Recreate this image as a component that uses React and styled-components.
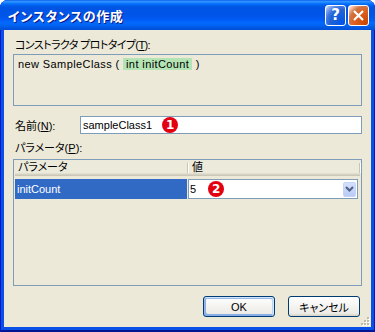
import React from 'react';
import styled, { createGlobalStyle } from 'styled-components';

const GlobalStyle = createGlobalStyle`
    html, body {
        margin: 0;
        padding: 0;
        background: #fff;
    }
    body {
        font-family: "Liberation Sans", "Noto Sans CJK JP", sans-serif;
        font-size: 11px;
        color: #000;
        font-feature-settings: "palt";
    }
`;

const Window = styled.div`
    width: 375px;
    height: 332px;
    display: flex;
    flex-direction: column;
    border-radius: 8px 8px 0 0;
    overflow: hidden;
    background: #0a4fe6;
    box-shadow: inset 1px 0 #0019c8, inset -1px 0 #0019c8, inset 0 -2px #00158f;
`;

const TitleBar = styled.div`
    height: 30px;
    flex: none;
    display: flex;
    align-items: center;
    padding: 0 6px 0 8px;
    background: linear-gradient(to bottom, #0058ee 0%, #3593ff 4%, #288eff 7%, #127dff 10%, #036ffc 13%, #0262ee 17%, #0057e5 23%, #0054e3 27%, #0055eb 56%, #005bf5 66%, #026afe 76%, #0062ef 86%, #0056e0 93%, #004fd6 100%);
`;

const Title = styled.div`
    flex: 1;
    color: #fff;
    font-size: 13px;
    font-weight: bold;
    letter-spacing: 0.6px;
    text-shadow: 1px 1px #0a1883;
`;

const CaptionButtons = styled.div`
    display: flex;
    gap: 2px;
`;

const CaptionButton = styled.div`
    width: 21px;
    height: 21px;
    box-sizing: border-box;
    border: 1px solid #fff;
    border-radius: 3px;
    display: flex;
    align-items: center;
    justify-content: center;
    color: #fff;
    font-family: "DejaVu Sans", sans-serif;
    font-weight: bold;
    font-size: 15px;
    background: ${p => (p.$close
        ? 'radial-gradient(circle at 90% 90%, #cc4600 0%, #dc6527 55%, #cd7546 70%, #ffccb2 90%, #fff 100%)'
        : 'radial-gradient(circle at 90% 90%, #0054e9 0%, #2263d5 55%, #4479e4 70%, #a3bbec 90%, #fff 100%)')};
`;

const Client = styled.div`
    position: relative;
    flex: 1;
    margin: 0 4px 5px;
    padding: 8px 9px 0;
    display: flex;
    flex-direction: column;
    background: #ece9d8;
`;

const Label = styled.div`
    height: 14px;
    line-height: 14px;
    padding-left: 2px;
    margin-top: ${p => p.$top || 0}px;
    letter-spacing: ${p => p.$tight ? '-0.6px' : 'normal'};
    white-space: nowrap;
`;

const Key = styled.span`
    text-decoration: underline;
`;

const ProtoBox = styled.div`
    margin-top: 2px;
    height: 52px;
    box-sizing: border-box;
    border: 1px solid #7f9db9;
    padding: 2px 4px;
    line-height: 14px;
    letter-spacing: 0.4px;
    white-space: pre;
`;

const Param = styled.span`
    background: #b4e4b4;
    padding: 0 3px;
`;

const NameRow = styled.div`
    margin-top: 10px;
    height: 18px;
    display: flex;
    align-items: center;
`;

const NameLabel = styled.div`
    width: 65px;
    padding-left: 2px;
    flex: none;
`;

const TextBox = styled.div`
    flex: 1;
    height: 18px;
    box-sizing: border-box;
    border: 1px solid #7f9db9;
    background: #fff;
    display: flex;
    align-items: center;
    padding-left: 2px;
`;

const Badge = styled.span`
    width: 16px;
    height: 16px;
    border-radius: 50%;
    background: #e3000f;
    color: #fff;
    font-family: "DejaVu Sans", sans-serif;
    font-weight: bold;
    font-size: 12px;
    letter-spacing: 0;
    display: inline-flex;
    align-items: center;
    justify-content: center;
    margin-left: ${p => p.$gap}px;
    flex: none;
`;

const Grid = styled.div`
    margin-top: 4px;
    height: 127px;
    box-sizing: border-box;
    border: 1px solid #7f9db9;
    padding: 0 1px;
`;

const Header = styled.div`
    height: 16px;
    display: flex;
    background: #ebeadb;
    box-shadow: inset 0 -1px #cbc7b8, inset 0 -2px #d6d2c2, inset 0 -3px #e2ded0;
`;

const HeaderCell = styled.div`
    position: relative;
    width: ${p => (p.$width ? `${p.$width}px` : 'auto')};
    flex: ${p => (p.$width ? 'none' : 1)};
    line-height: 14px;
    padding-left: ${p => p.$pad}px;
    box-sizing: border-box;
    &::after {
        content: '';
        position: absolute;
        right: 0;
        top: 3px;
        height: 10px;
        width: 1px;
        background: #c7c5b2;
        box-shadow: 1px 0 #fff;
    }
`;

const Row = styled.div`
    margin-top: 3px;
    height: 20px;
    display: flex;
`;

const NameCell = styled.div`
    width: 172px;
    flex: none;
    background: #316ac5;
    color: #fff;
    padding-left: 2px;
    box-sizing: border-box;
    display: flex;
    align-items: center;
`;

const Combo = styled.div`
    flex: 1;
    margin: 0 2px 0 1px;
    box-sizing: border-box;
    border: 1px solid #7f9db9;
    background: #fff;
    display: flex;
    align-items: center;
    padding-left: 1px;
`;

const ComboText = styled.span`
    flex: 1;
    display: flex;
    align-items: center;
`;

const DropButton = styled.div`
    width: 13px;
    height: 15px;
    margin-right: 1px;
    border-radius: 2px;
    background: linear-gradient(to bottom, #d5e0fc, #b9cbf6);
    border: 1px solid #c3d3fd;
    box-sizing: border-box;
    display: flex;
    align-items: center;
    justify-content: center;
`;

const ButtonRow = styled.div`
    margin-top: 10px;
    display: flex;
    justify-content: flex-end;
    gap: 13px;
    padding-right: 2px;
`;

const Button = styled.div`
    width: 72px;
    height: 21px;
    box-sizing: border-box;
    border: 1px solid #003c74;
    border-radius: 3px;
    background: linear-gradient(180deg, #fff 0%, #ecebe6 86%, #d6d0c5 100%);
    display: flex;
    align-items: center;
    justify-content: center;
    box-shadow: ${p => (p.$default
        ? 'inset -1px 1px #cee7ff, inset 1px 2px #98b8ea, inset -2px 2px #bcd4f6, inset 1px -1px #89ade4, inset 2px -2px #89ade4'
        : 'none')};
`;

const Grip = styled.svg`
    position: absolute;
    right: 1px;
    bottom: 1px;
`;

const App = () => (
    <>
        <GlobalStyle />
        <Window>
            <TitleBar>
                <Title>インスタンスの作成</Title>
                <CaptionButtons>
                    <CaptionButton>?</CaptionButton>
                    <CaptionButton $close>
                        <svg width="13" height="13" viewBox="0 0 13 13">
                            <path d="M2 2 L11 11 M11 2 L2 11" stroke="#fff" strokeWidth="2.2" />
                        </svg>
                    </CaptionButton>
                </CaptionButtons>
            </TitleBar>
            <Client>
                <Label $tight>コンストラクタ プロトタイプ(<Key>T</Key>):</Label>
                <ProtoBox>
                    new SampleClass ( <Param>int initCount</Param> )
                </ProtoBox>
                <NameRow>
                    <NameLabel>名前(<Key>N</Key>):</NameLabel>
                    <TextBox>
                        sampleClass1
                        <Badge $gap={10}>1</Badge>
                    </TextBox>
                </NameRow>
                <Label $top={7}>パラメータ(<Key>P</Key>):</Label>
                <Grid>
                    <Header>
                        <HeaderCell $width={173} $pad={3}>パラメータ</HeaderCell>
                        <HeaderCell $pad={4}>値</HeaderCell>
                    </Header>
                    <Row>
                        <NameCell>initCount</NameCell>
                        <Combo>
                            <ComboText>
                                5
                                <Badge $gap={12}>2</Badge>
                            </ComboText>
                            <DropButton>
                                <svg width="9" height="6" viewBox="0 0 9 6">
                                    <path d="M1 1 L4.5 4.5 L8 1" stroke="#4d6185" strokeWidth="2" fill="none" />
                                </svg>
                            </DropButton>
                        </Combo>
                    </Row>
                </Grid>
                <ButtonRow>
                    <Button $default>OK</Button>
                    <Button>キャンセル</Button>
                </ButtonRow>
                <Grip width="10" height="10" viewBox="0 0 10 10">
                    {[[7, 1], [4, 4], [7, 4], [1, 7], [4, 7], [7, 7]].map(([x, y]) => (
                        <g key={`${x}-${y}`}>
                            <rect x={x + 1} y={y + 1} width="2" height="2" fill="#fff" />
                            <rect x={x} y={y} width="2" height="2" fill="#c1bca9" />
                        </g>
                    ))}
                </Grip>
            </Client>
        </Window>
    </>
);

export default App;
